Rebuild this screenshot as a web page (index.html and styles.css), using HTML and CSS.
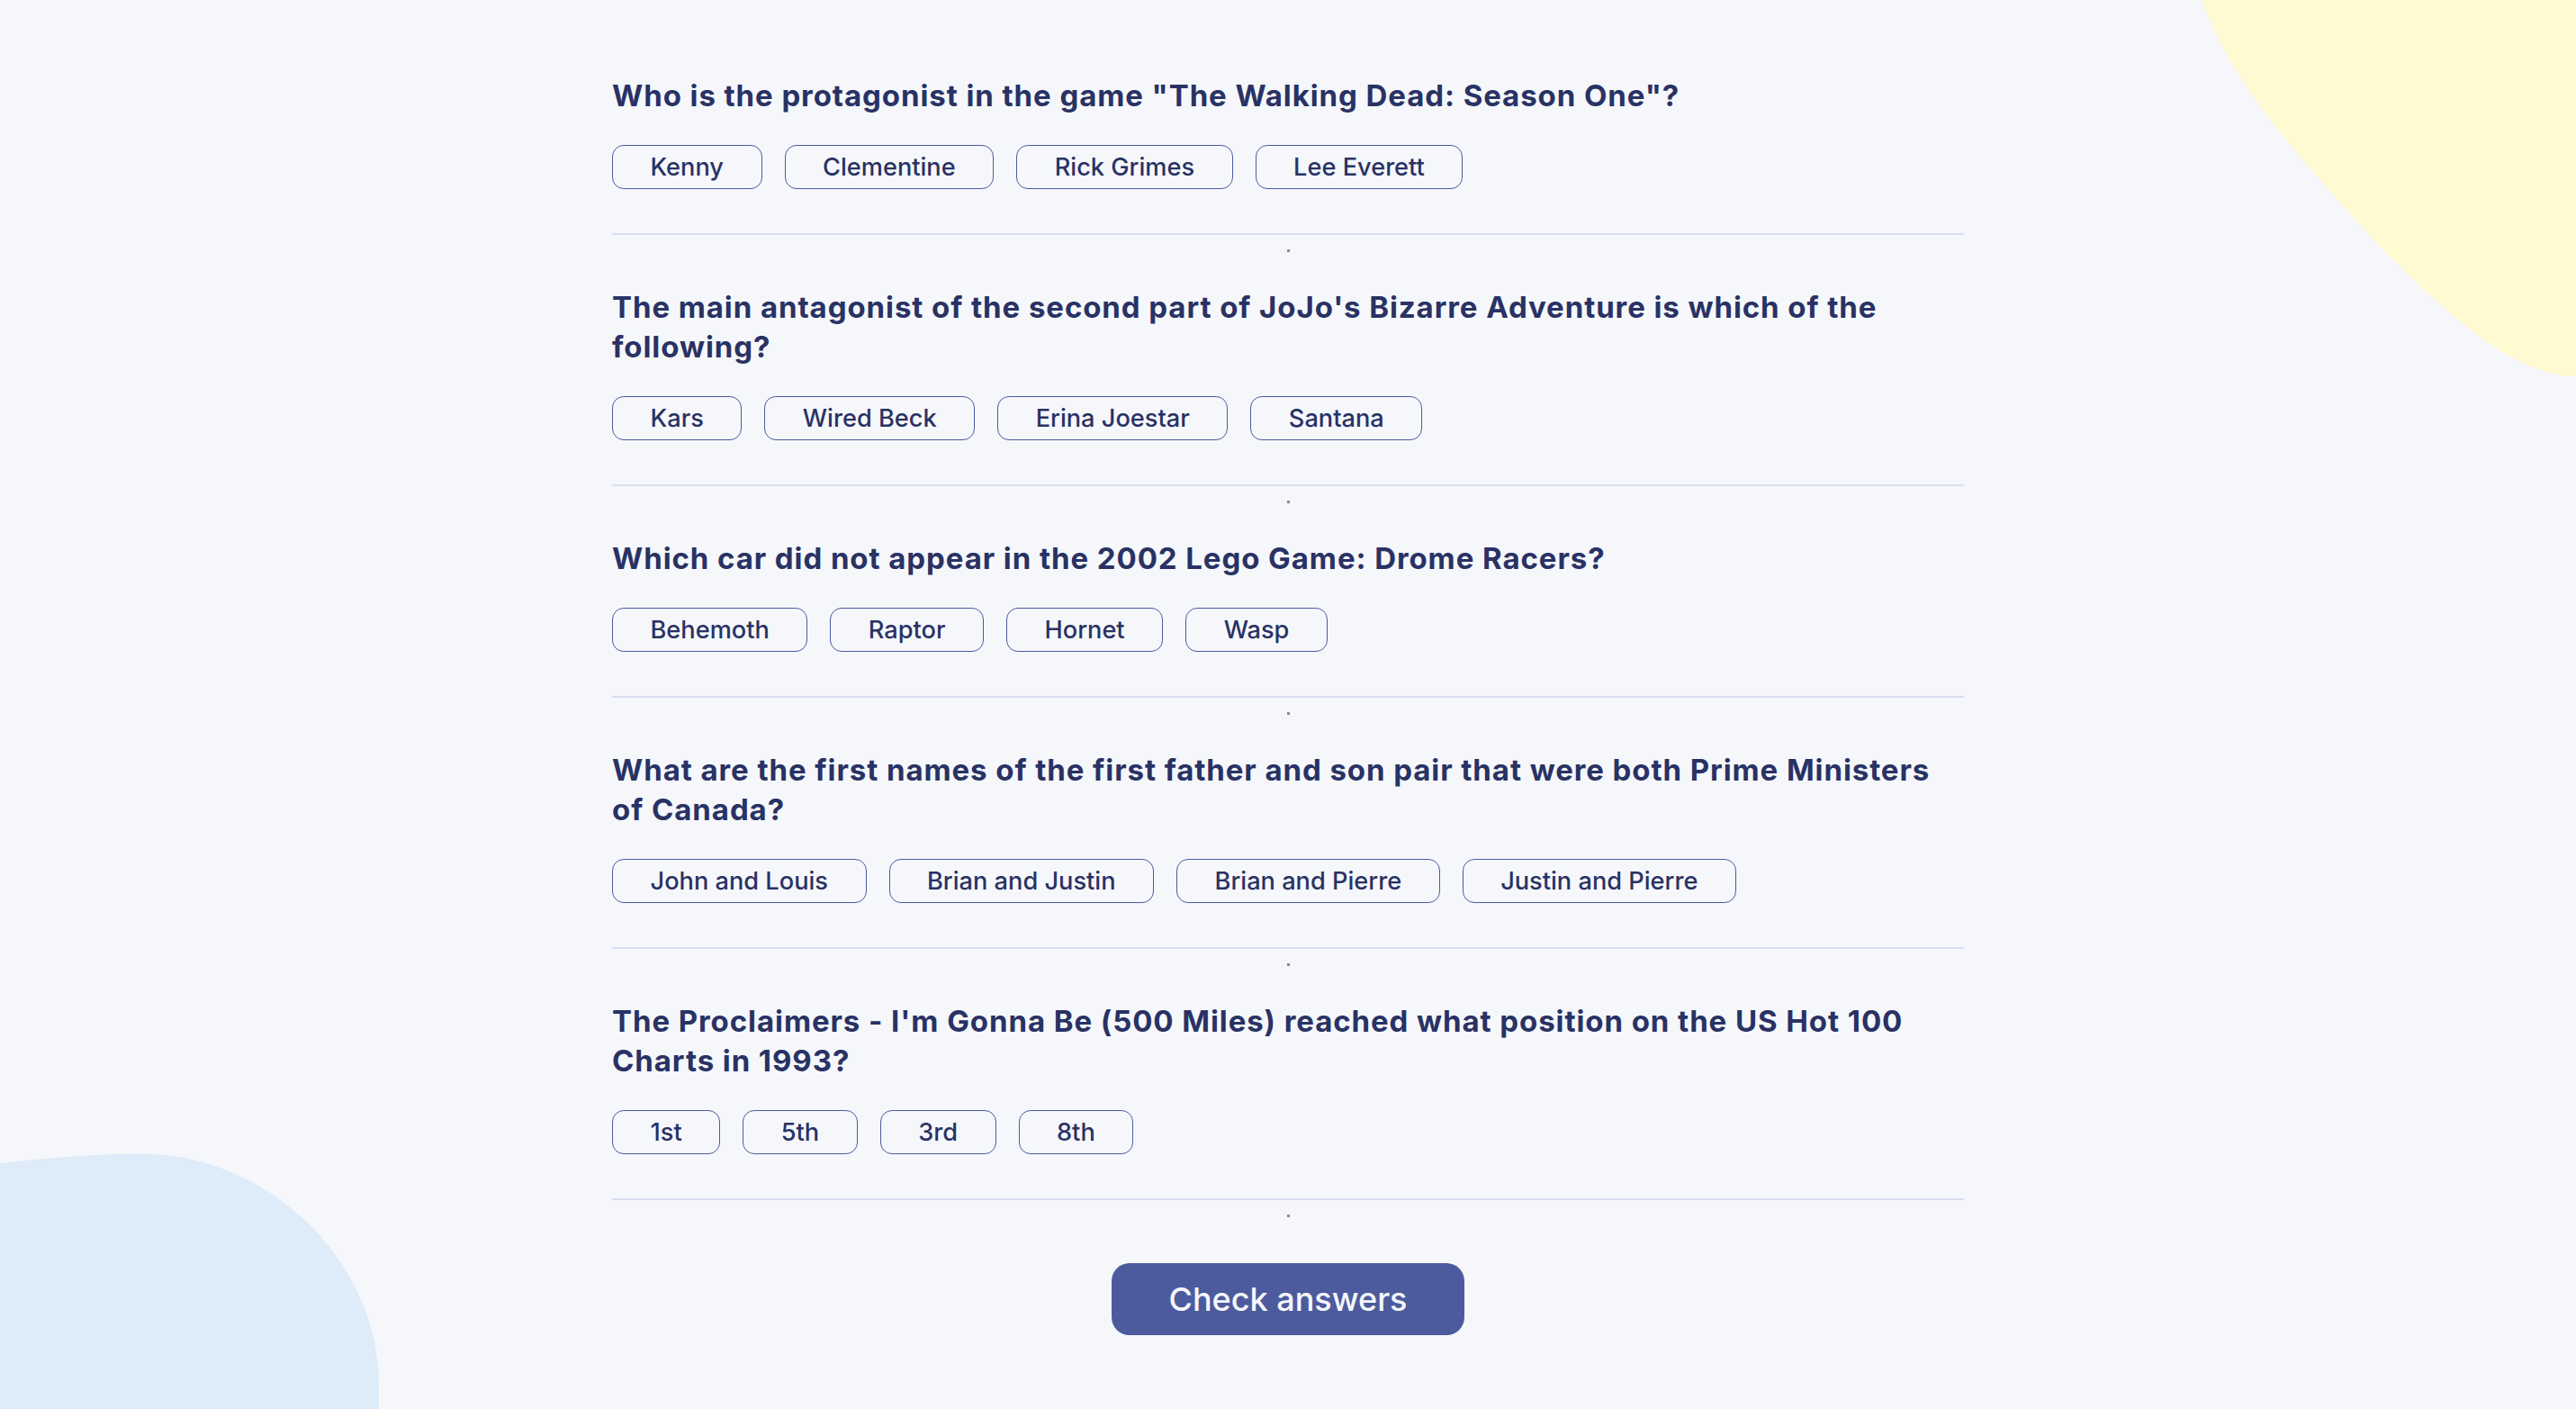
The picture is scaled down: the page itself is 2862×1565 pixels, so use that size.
FILE: index.html
```html
<!DOCTYPE html>
<html lang="en">
<head>
<meta charset="utf-8">
<title>Quizzical</title>
<link rel="stylesheet" href="styles.css">
</head>
<body>
<svg class="blob blob-yellow" width="462" height="420" viewBox="0 0 462 420" aria-hidden="true">
  <path d="M47,0 C80,100 170,190 240,270 C310,340 390,418 462,418 L462,0 Z" fill="#FFFAD1"/>
</svg>
<svg class="blob blob-blue" width="422" height="285" viewBox="0 0 422 285" aria-hidden="true">
  <path d="M0,12 C60,6 120,0 170,2 C300,8 421,120 421,260 L421,285 L0,285 Z" fill="#DEEBF8"/>
</svg>
<main class="quiz">
  <section class="question">
    <h2 class="question-title">Who is the protagonist in the game "The Walking Dead: Season One"?</h2>
    <div class="answers">
      <button class="answer">Kenny</button>
      <button class="answer">Clementine</button>
      <button class="answer">Rick Grimes</button>
      <button class="answer">Lee Everett</button>
    </div>
  </section>
  <div class="sep"><span class="dot"></span></div>
  <section class="question">
    <h2 class="question-title">The main antagonist of the second part of JoJo's Bizarre Adventure is which of the following?</h2>
    <div class="answers">
      <button class="answer">Kars</button>
      <button class="answer">Wired Beck</button>
      <button class="answer">Erina Joestar</button>
      <button class="answer">Santana</button>
    </div>
  </section>
  <div class="sep"><span class="dot"></span></div>
  <section class="question">
    <h2 class="question-title">Which car did not appear in the 2002 Lego Game: Drome Racers?</h2>
    <div class="answers">
      <button class="answer">Behemoth</button>
      <button class="answer">Raptor</button>
      <button class="answer">Hornet</button>
      <button class="answer">Wasp</button>
    </div>
  </section>
  <div class="sep"><span class="dot"></span></div>
  <section class="question">
    <h2 class="question-title">What are the first names of the first father and son pair that were both Prime Ministers of Canada?</h2>
    <div class="answers">
      <button class="answer">John and Louis</button>
      <button class="answer">Brian and Justin</button>
      <button class="answer">Brian and Pierre</button>
      <button class="answer">Justin and Pierre</button>
    </div>
  </section>
  <div class="sep"><span class="dot"></span></div>
  <section class="question">
    <h2 class="question-title">The Proclaimers - I'm Gonna Be (500 Miles) reached what position on the US Hot 100 Charts in 1993?</h2>
    <div class="answers">
      <button class="answer">1st</button>
      <button class="answer">5th</button>
      <button class="answer">3rd</button>
      <button class="answer">8th</button>
    </div>
  </section>
  <div class="sep sep-last"><span class="dot"></span></div>
  <div class="actions">
    <button class="check-btn">Check answers</button>
  </div>
</main>
</body>
</html>
```
FILE: styles.css
```css
html, body {
  margin: 0;
  padding: 0;
  height: 100%;
}
body {
  background: #F5F7FB;
  color: #293264;
  font-family: Inter, "Noto Sans", sans-serif;
  position: relative;
  overflow: hidden;
  min-height: 1565px;
}
.blob {
  position: absolute;
  display: block;
}
.blob-yellow {
  top: 0;
  right: 0;
}
.blob-blue {
  left: 0;
  bottom: 0;
}
.quiz {
  position: relative;
  width: 1502px;
  margin: 0 auto;
  padding-top: 84px;
}
.question {
  padding-bottom: 49px;
  border-bottom: 2px solid #DBDEF0;
}
.question-title {
  margin: 0;
  font-family: Inter, "Noto Sans", sans-serif;
  font-weight: 700;
  font-size: 33px;
  line-height: 44px;
  letter-spacing: 0.92px;
  color: #293264;
}
.answers {
  display: flex;
  gap: 25px;
  margin-top: 33px;
}
.answer {
  font-family: Inter, "Noto Sans", sans-serif;
  font-weight: 500;
  font-size: 27.2px;
  line-height: 47px;
  height: 49px;
  padding: 0 41.5px;
  border: 1px solid #4D5B9E;
  border-radius: 13px;
  background: transparent;
  color: #293264;
  cursor: pointer;
}
.sep {
  height: 58px;
  display: flex;
  justify-content: center;
}
.dot {
  display: block;
  width: 3px;
  height: 3px;
  margin-top: 16px;
  background: #8a8a8a;
}
.sep-last {
  height: 70px;
}
.actions {
  display: flex;
  justify-content: center;
}
.check-btn {
  width: 392px;
  height: 80px;
  border: none;
  border-radius: 20px;
  background: #4D5B9E;
  color: #F5F7FB;
  font-family: Inter, "Noto Sans", sans-serif;
  font-weight: 500;
  font-size: 36px;
  cursor: pointer;
}
```
